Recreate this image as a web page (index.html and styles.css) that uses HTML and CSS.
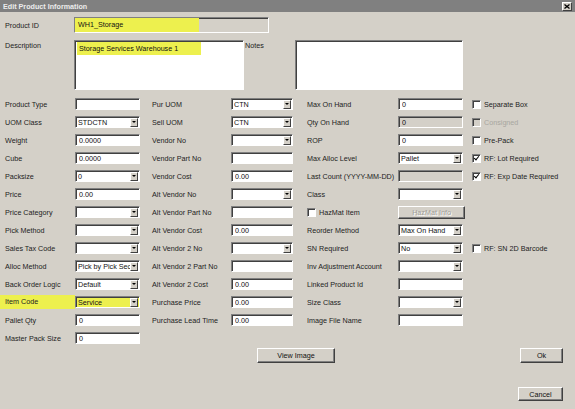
FILE: index.html
```html
<!DOCTYPE html>
<html lang="en">
<head>
  <meta charset="UTF-8">
  <meta name="viewport" content="width=device-width, initial-scale=1.0">
  <title>Edit Product Information</title>
  <link rel="stylesheet" href="styles.css">
</head>
<body>
  <div class="window">
    <div class="titlebar">
      <span>Edit Product Information</span>
      <span class="close">
        <svg width="6" height="5" viewBox="0 0 6 5"><path d="M0.5 0.5 L5.5 4.5 M5.5 0.5 L0.5 4.5" stroke="#000" stroke-width="1.3"/></svg>
      </span>
    </div>

    <form class="dialog">
      <div class="id-row">
        <span class="lbl">Product ID</span>
        <div class="field id-field readonly"><span class="hl">WH1_Storage</span></div>
      </div>

      <div class="desc-row">
        <span class="lbl">Description</span>
        <div class="memo"><span class="hl">Storage Services Warehouse 1</span></div>
        <span class="notes-lbl">Notes</span>
        <div class="memo notes"></div>
      </div>

      <div class="grid">
        <div class="row">
          <span class="lbl">Product Type</span><input class="field" value="">
          <span class="lbl">Pur UOM</span><div class="combo"><span>CTN</span><i class="arrow"></i></div>
          <span class="lbl">Max On Hand</span><input class="field" value="0">
          <label class="check"><span class="box"></span>Separate Box</label>
        </div>
        <div class="row">
          <span class="lbl">UOM Class</span><div class="combo"><span>STDCTN</span><i class="arrow"></i></div>
          <span class="lbl">Sell UOM</span><div class="combo"><span>CTN</span><i class="arrow"></i></div>
          <span class="lbl">Qty On Hand</span><input class="field readonly" value="0">
          <label class="check disabled"><span class="box"></span>Consigned</label>
        </div>
        <div class="row">
          <span class="lbl">Weight</span><input class="field" value="0.0000">
          <span class="lbl">Vendor No</span><div class="combo"><span></span><i class="arrow"></i></div>
          <span class="lbl">ROP</span><input class="field" value="0">
          <label class="check"><span class="box"></span>Pre-Pack</label>
        </div>
        <div class="row">
          <span class="lbl">Cube</span><input class="field" value="0.0000">
          <span class="lbl">Vendor Part No</span><input class="field" value="">
          <span class="lbl">Max Alloc Level</span><div class="combo"><span>Pallet</span><i class="arrow"></i></div>
          <label class="check checked"><span class="box"></span>RF: Lot Required</label>
        </div>
        <div class="row">
          <span class="lbl">Packsize</span><div class="combo"><span>0</span><i class="arrow"></i></div>
          <span class="lbl">Vendor Cost</span><input class="field" value="0.00">
          <span class="lbl">Last Count (YYYY-MM-DD)</span><input class="field readonly" value="">
          <label class="check checked"><span class="box"></span>RF: Exp Date Required</label>
        </div>
        <div class="row">
          <span class="lbl">Price</span><input class="field" value="0.00">
          <span class="lbl">Alt Vendor No</span><div class="combo"><span></span><i class="arrow"></i></div>
          <span class="lbl">Class</span><div class="combo"><span></span><i class="arrow"></i></div>
          <span></span>
        </div>
        <div class="row">
          <span class="lbl">Price Category</span><div class="combo"><span></span><i class="arrow"></i></div>
          <span class="lbl">Alt Vendor Part No</span><input class="field" value="">
          <label class="check hazmat"><span class="box"></span>HazMat Item</label><button type="button" class="btn btn-hazmat" disabled>HazMat Info</button>
          <span></span>
        </div>
        <div class="row">
          <span class="lbl">Pick Method</span><div class="combo"><span></span><i class="arrow"></i></div>
          <span class="lbl">Alt Vendor Cost</span><input class="field" value="0.00">
          <span class="lbl">Reorder Method</span><div class="combo"><span>Max On Hand</span><i class="arrow"></i></div>
          <span></span>
        </div>
        <div class="row">
          <span class="lbl">Sales Tax Code</span><div class="combo"><span></span><i class="arrow"></i></div>
          <span class="lbl">Alt Vendor 2 No</span><div class="combo"><span></span><i class="arrow"></i></div>
          <span class="lbl">SN Required</span><div class="combo"><span>No</span><i class="arrow"></i></div>
          <label class="check"><span class="box"></span>RF: SN 2D Barcode</label>
        </div>
        <div class="row">
          <span class="lbl">Alloc Method</span><div class="combo"><span>Pick by Pick Sec</span><i class="arrow"></i></div>
          <span class="lbl">Alt Vendor 2 Part No</span><input class="field" value="">
          <span class="lbl">Inv Adjustment Account</span><div class="combo"><span></span><i class="arrow"></i></div>
          <span></span>
        </div>
        <div class="row">
          <span class="lbl">Back Order Logic</span><div class="combo"><span>Default</span><i class="arrow"></i></div>
          <span class="lbl">Alt Vendor 2 Cost</span><input class="field" value="0.00">
          <span class="lbl">Linked Product Id</span><input class="field" value="">
          <span></span>
        </div>
        <div class="row">
          <span class="lbl hl-strip">Item Code</span><div class="combo hl-combo"><span>Service</span><i class="arrow"></i></div>
          <span class="lbl">Purchase Price</span><input class="field" value="0.00">
          <span class="lbl">Size Class</span><div class="combo"><span></span><i class="arrow"></i></div>
          <span></span>
        </div>
        <div class="row">
          <span class="lbl">Pallet Qty</span><input class="field" value="0">
          <span class="lbl">Purchase Lead Time</span><input class="field" value="0.00">
          <span class="lbl">Image File Name</span><input class="field" value="">
          <span></span>
        </div>
        <div class="row">
          <span class="lbl">Master Pack Size</span><input class="field" value="0">
          <span></span><span></span><span></span><span></span><span></span>
        </div>
      </div>

      <div class="actions">
        <button type="button" class="btn btn-view">View Image</button>
        <button type="button" class="btn btn-ok">Ok</button>
      </div>
      <div class="cancel-row">
        <button type="button" class="btn btn-cancel">Cancel</button>
      </div>
    </form>
  </div>
</body>
</html>
```

FILE: styles.css
```css
body {
  margin: 0;
  background: #d4d0c8;
  font-family: 'Liberation Sans', Arial, sans-serif;
  font-size: 7.2px;
  color: #222;
}
.window {
  width: 575px;
  height: 409px;
  overflow: hidden;
}
.titlebar {
  height: 12px;
  background: #808080;
  color: #ececec;
  font-weight: bold;
  display: flex;
  align-items: center;
  justify-content: space-between;
  padding: 0 3px 0 3px;
}
.close {
  width: 10px;
  height: 9px;
  box-sizing: border-box;
  background: #d4d0c8;
  border: 1px solid;
  border-color: #fff #404040 #404040 #fff;
  display: flex;
  align-items: center;
  justify-content: center;
}
.lbl {
  white-space: nowrap;
}

/* sunken edit box */
.field, .combo, .memo {
  box-sizing: border-box;
  height: 12px;
  margin: 0;
  background: #fff;
  border: 1px solid;
  border-color: #808080 #fff #fff #808080;
  box-shadow: inset 1px 1px #404040;
  font: inherit;
  color: #111;
  padding: 0 3px;
  outline: none;
}
.field.readonly {
  background: #d4d0c8;
}
.combo {
  display: flex;
  align-items: center;
  padding: 0 1px 0 2px;
}
.combo span {
  flex: 1;
  white-space: nowrap;
  overflow: hidden;
}
.arrow {
  flex: none;
  width: 8px;
  height: 9px;
  box-sizing: border-box;
  background: #d4d0c8;
  border: 1px solid;
  border-color: #fff #404040 #404040 #fff;
  display: flex;
  align-items: center;
  justify-content: center;
}
.arrow::after {
  content: '';
  border-left: 2px solid transparent;
  border-right: 2px solid transparent;
  border-top: 2px solid #000;
}
.hl {
  background: #edf04e;
}

/* top section */
.id-row {
  display: flex;
  align-items: center;
  margin-top: 5px;
  height: 16px;
}
.id-row .lbl, .desc-row .lbl {
  width: 69px;
  padding-left: 5px;
}
.id-field {
  width: 195px;
  height: 16px;
  padding: 0;
  display: flex;
}
.id-field .hl {
  width: 121px;
  padding-left: 3px;
  line-height: 14px;
}
.desc-row {
  display: flex;
  align-items: flex-start;
  margin-top: 7px;
}
.desc-row .lbl, .notes-lbl {
  padding-top: 1px;
}
.memo {
  width: 170px;
  height: 50px;
  padding: 1px 2px;
}
.memo .hl {
  display: inline-block;
  width: 122px;
  height: 13px;
  line-height: 13px;
  padding-left: 2px;
}
.notes-lbl {
  width: 50px;
  padding-left: 1px;
}
.memo.notes {
  width: 168px;
}

/* main grid */
.grid {
  margin-top: 5px;
}
.row {
  display: grid;
  grid-template-columns: 75px 65px 91px 62px 105px 65px 1fr;
  height: 18px;
  align-items: center;
}
.row > .lbl:nth-child(1) {
  padding-left: 5px;
}
.row > .lbl:nth-child(3) {
  padding-left: 12px;
}
.row > .lbl:nth-child(5), .row > .hazmat {
  padding-left: 14px;
}
.row > .check:last-child {
  padding-left: 9px;
}
.hl-strip {
  background: #edf04e;
  height: 14px;
  line-height: 14px;
}
.combo.hl-combo {
  background: #edf04e;
}

/* checkboxes */
.check {
  display: flex;
  align-items: center;
  gap: 3px;
  white-space: nowrap;
}
.box {
  width: 9px;
  height: 9px;
  box-sizing: border-box;
  background: #fff;
  border: 1px solid;
  border-color: #808080 #fff #fff #808080;
  box-shadow: inset 1px 1px #404040;
  position: relative;
}
.check.checked .box::after {
  content: '';
  position: absolute;
  left: 2px;
  top: 0px;
  width: 2px;
  height: 4px;
  border: solid #000;
  border-width: 0 1.5px 1.5px 0;
  transform: rotate(40deg);
}
.check.disabled {
  color: #a8a6a0;
}
.check.disabled .box {
  background: #d4d0c8;
}

/* buttons */
.btn {
  box-sizing: border-box;
  height: 15px;
  margin: 0;
  padding: 0;
  background: #d4d0c8;
  border: 1px solid;
  border-color: #fff #404040 #404040 #fff;
  box-shadow: inset -1px -1px #808080;
  font: inherit;
  color: #111;
}
.btn:disabled {
  color: #a09e98;
  text-shadow: 1px 1px #fff;
}
.btn-hazmat {
  width: 67px;
  height: 13px;
}
.actions {
  display: flex;
  align-items: center;
  margin-top: 1px;
  padding: 0 12px 0 257px;
}
.btn-view {
  width: 78px;
}
.btn-ok {
  width: 43px;
  margin-left: auto;
}
.cancel-row {
  display: flex;
  justify-content: flex-end;
  margin-top: 24px;
  padding-right: 12px;
}
.btn-cancel {
  width: 45px;
  height: 14px;
}
```
